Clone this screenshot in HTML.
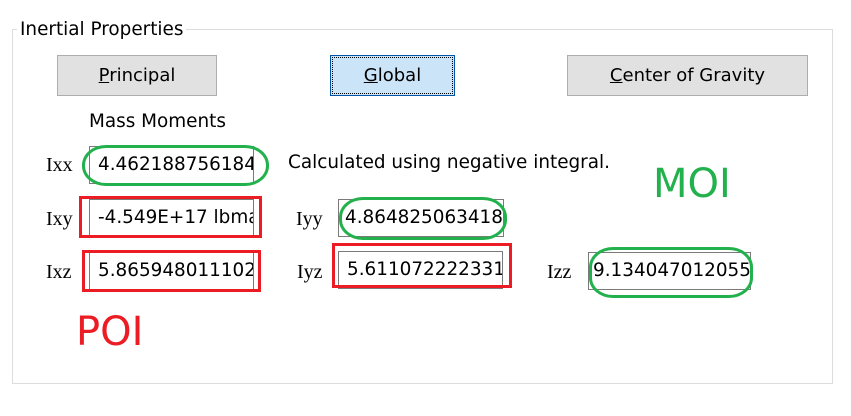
<!DOCTYPE html>
<html><head><style>
body{margin:0;width:851px;height:416px;background:#fff;position:relative;overflow:hidden;font-family:"DejaVu Sans","Liberation Sans",sans-serif;font-size:18.4px;color:#000}
.a{position:absolute;white-space:nowrap}
.gb{position:absolute;left:12px;top:29px;width:819px;height:353px;border:1px solid #dcdcdc}
.btn{position:absolute;top:55px;height:41px;background:#e1e1e1;border:1px solid #adadad;box-sizing:border-box;text-align:center;line-height:40px;font-size:18px}
.tb{position:absolute;height:38px;border:1px solid #7a7a7a;box-sizing:border-box;background:#fff;overflow:hidden;line-height:36px;padding-left:8px;white-space:nowrap;font-size:18.4px}
.red{position:absolute;border:3px solid #ec1c24;box-sizing:border-box}
.grn{position:absolute;border:3px solid #22b14c;box-sizing:border-box;border-radius:24px/20px}
.lb{position:absolute;font-family:"Liberation Serif",serif;font-size:20px}
</style></head><body>
<div class="gb"></div>
<div class="a" style="left:17px;top:19px;background:#fff;padding:0 3px;font-size:18.4px">Inertial Properties</div>
<div class="btn" style="left:57px;width:160px"><u>P</u>rincipal</div>
<div class="btn" style="left:330px;width:125px;background:#cce4f7;border-color:#0055aa;outline:1px dotted #000;outline-offset:-3px"><u>G</u>lobal</div>
<div class="btn" style="left:567px;width:241px"><u>C</u>enter of Gravity</div>
<div class="a" style="left:89px;top:111px">Mass Moments</div>
<div class="lb" style="left:46px;top:154px">Ixx</div>
<div class="lb" style="left:46px;top:208px">Ixy</div>
<div class="lb" style="left:46px;top:261px">Ixz</div>
<div class="lb" style="left:296px;top:208px">Iyy</div>
<div class="lb" style="left:297px;top:261px">Iyz</div>
<div class="lb" style="left:547px;top:261px">Izz</div>
<div class="tb" style="left:89px;top:146px;width:165px">4.462188756184200</div>
<div class="tb" style="left:89px;top:199px;width:165px">-4.549E+17 lbmass</div>
<div class="tb" style="left:89px;top:252px;width:165px">5.865948011102200</div>
<div class="tb" style="left:338px;top:199px;width:166px;padding-left:6px">4.864825063418000</div>
<div class="tb" style="left:338px;top:251px;width:165px">5.611072222331800</div>
<div class="tb" style="left:588px;top:252px;width:163px;padding-left:4px">9.134047012055</div>
<div class="a" style="left:288px;top:152px">Calculated using negative integral.</div>
<div class="grn" style="left:82px;top:145px;width:187px;height:41px"></div>
<div class="red" style="left:79px;top:196px;width:183px;height:42px"></div>
<div class="red" style="left:82px;top:250px;width:179px;height:42px"></div>
<div class="grn" style="left:339px;top:197px;width:168px;height:43px"></div>
<div class="red" style="left:332px;top:243px;width:180px;height:45px"></div>
<div class="grn" style="left:589px;top:247px;width:164px;height:51px"></div>
<div class="a" style="left:653px;top:161px;font-size:40px;color:#22b14c">MOI</div>
<div class="a" style="left:76px;top:309px;font-size:40px;color:#ec1c24">POI</div>
</body></html>
